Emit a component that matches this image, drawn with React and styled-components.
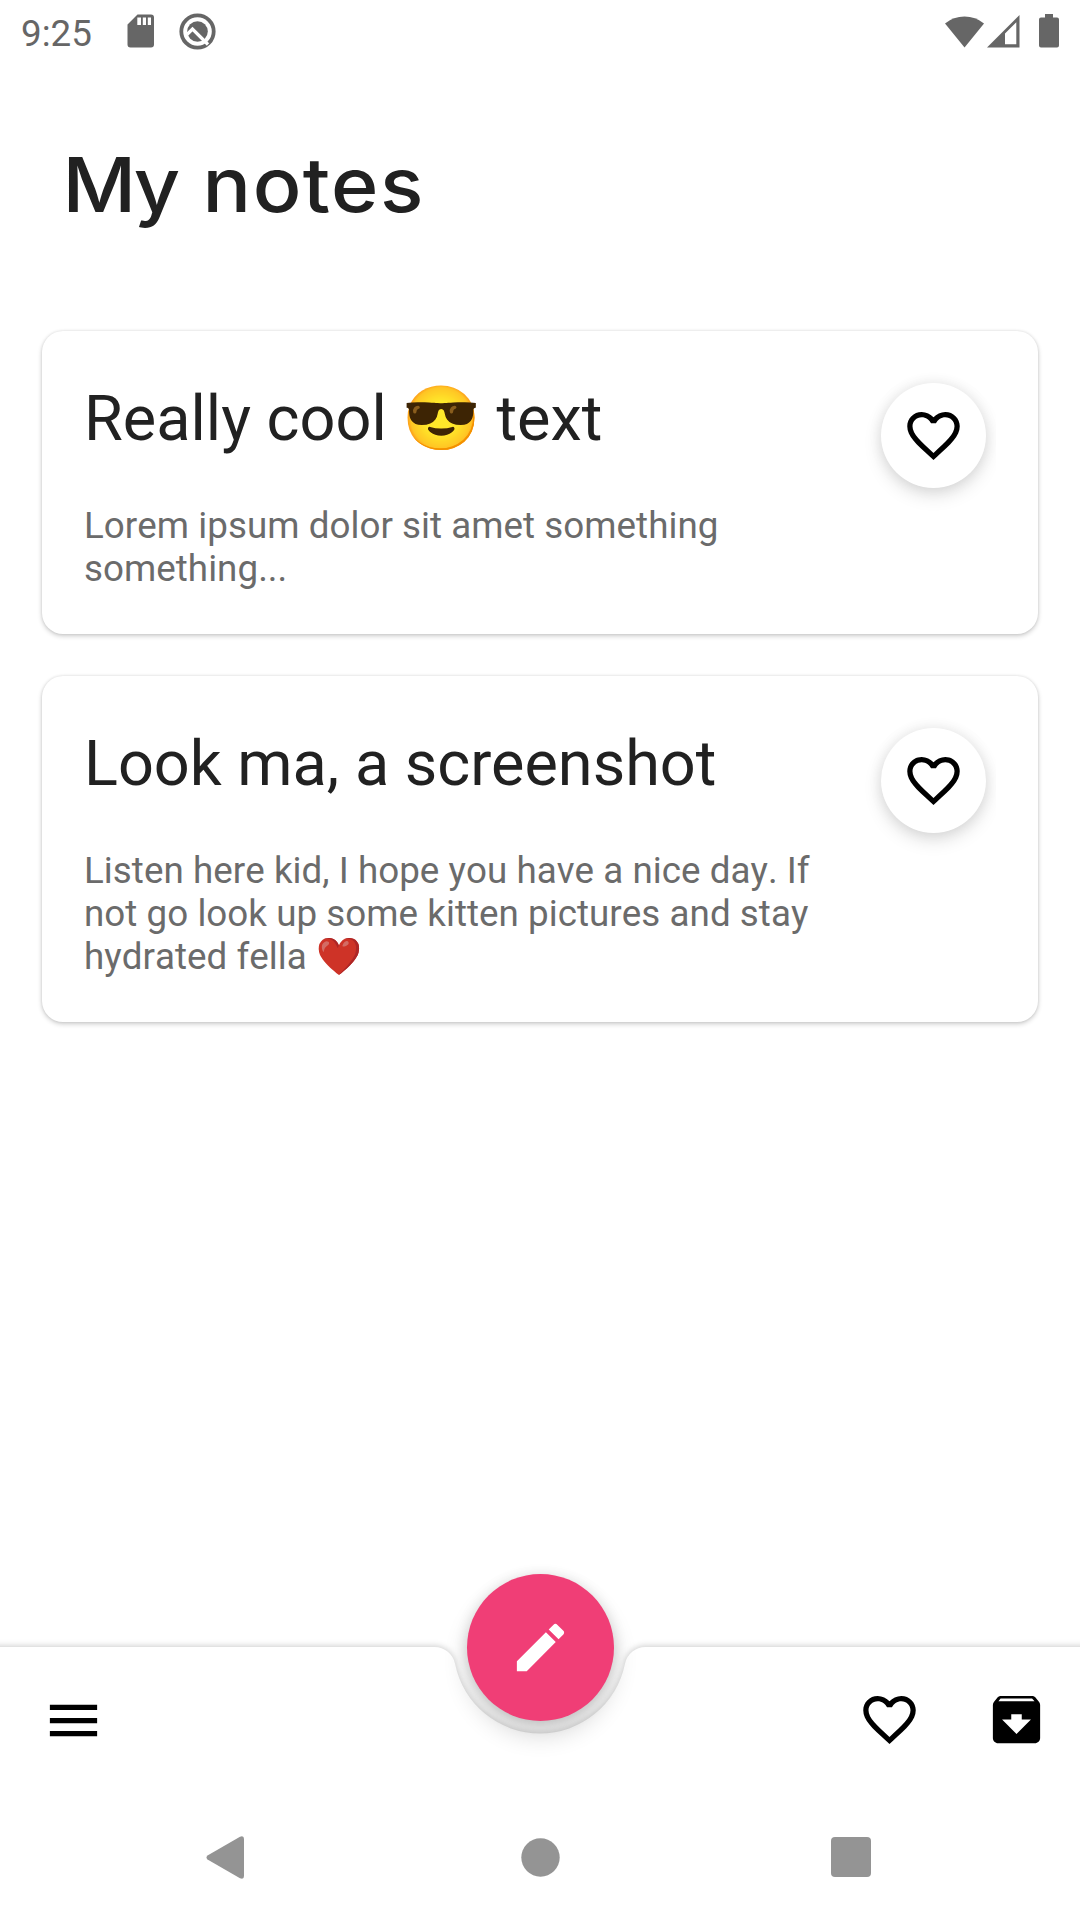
import React from 'react';
import styled, { createGlobalStyle } from 'styled-components';

const GlobalStyle = createGlobalStyle`
  * { box-sizing: border-box; }
  body { margin: 0; background: #fff; font-family: Roboto, "Noto Color Emoji", sans-serif; }
  button { border: 0; padding: 0; background: none; display: grid; place-items: center; }
  svg { display: block; }
`;

const Screen = styled.div`
  width: 1080px;
  height: 1920px;
  display: flex;
  flex-direction: column;
  background: #fff;
  overflow: hidden;
`;

const StatusBar = styled.header`
  height: 63px;
  flex: none;
  display: flex;
  align-items: center;
  justify-content: space-between;
  padding: 0 21px 1px 21px;
  color: #666;
`;

const StatusGroup = styled.div`
  display: flex;
  align-items: center;
  gap: ${(p) => p.$gap}px;
`;

const Clock = styled.span`
  font-size: 36.75px;
  line-height: 43px;
  width: 80px;
  margin-top: 4px;
`;

const Heading = styled.h1`
  margin: 0;
  padding: 76px 0 0 63px;
  height: 268px;
  flex: none;
  font-family: Inter, sans-serif;
  font-size: 75.6px;
  line-height: 92px;
  font-weight: 500;
  letter-spacing: 1.4px;
  word-spacing: -2px;
  color: #212121;
  transform: scaleX(1.067);
  transform-origin: 69px 0;
`;

const FirstLetter = styled.span`
  letter-spacing: -2.2px;
`;

const NoteList = styled.main`
  flex: 1;
  display: flex;
  flex-direction: column;
  gap: 42px;
  padding: 0 42px;
`;

const Card = styled.article`
  display: flex;
  justify-content: space-between;
  padding: 0 0 44px 42px;
  border-radius: 21px;
  background: #fff;
  box-shadow: 0 2px 5px rgba(0, 0, 0, 0.2), 0 0 3px rgba(0, 0, 0, 0.1);
`;

const CardText = styled.div`
  width: 760px;
  padding-top: 51px;
`;

const CardTitle = styled.h2`
  margin: 0;
  font-size: 63px;
  line-height: 74px;
  font-weight: 400;
  color: #212121;
  white-space: nowrap;
`;

const CardBody = styled.div`
  margin: 48px 0 0;
  font-size: 36.75px;
  line-height: 43px;
  font-kerning: none;
  letter-spacing: 0.04px;
  color: #6b6b6b;
  white-space: nowrap;
`;

const BodyLine = styled.div`
  height: 43px;
  display: flex;
  gap: 10px;
`;

const Emoji = styled.span`
  filter: ${(p) => p.$tone};
`;

const FavoriteSlot = styled.div`
  padding: 52px 10px 0 0;
  margin-right: 42px;
  clip-path: inset(0 0 -30px -30px);
`;

const FavoriteButton = styled.button`
  width: 105px;
  height: 105px;
  border-radius: 50%;
  background: #fff;
  box-shadow: 0 7px 18px rgba(0, 0, 0, 0.13), 0 0 14px rgba(0, 0, 0, 0.08);
`;

const AppBar = styled.footer`
  position: relative;
  flex: none;
  height: 147px;
  display: flex;
  align-items: center;
  justify-content: space-between;
  padding: 0 32px 0 42px;
`;

const BarShadow = styled.div`
  position: absolute;
  inset: 0 -20px -126px;
  filter: drop-shadow(0 -1px 3px rgba(0, 0, 0, 0.2));
`;

const BarSurface = styled.div`
  height: 100%;
  background: #fff;
  clip-path: path("M0 0H454.5A21 21 0 0 1 475.1 16.9A86.6 86.6 0 0 0 644.9 16.9A21 21 0 0 1 665.5 0H1120V273H0Z");
`;

const BarActions = styled.div`
  position: relative;
  display: flex;
  gap: ${(p) => p.$gap || 0}px;
  padding-bottom: ${(p) => (p.$gap ? 2 : 0)}px;
`;

const ComposeButton = styled.button`
  position: absolute;
  left: 467px;
  top: -73px;
  width: 147px;
  height: 147px;
  border-radius: 50%;
  background: #f03e76;
  box-shadow: 0 14px 24px rgba(0, 0, 0, 0.16), 0 2px 14px rgba(0, 0, 0, 0.14);
`;

const SystemNav = styled.nav`
  position: relative;
  flex: none;
  height: 126px;
  display: grid;
  grid-template-columns: 38px 1fr 40px;
  align-items: center;
  justify-items: center;
  padding: 0 209px 0 206px;
`;

const HomeKey = styled.span`
  padding-left: 5px;
`;

const Material = ({ d, fill = '#000', size = 63 }) => (
  <svg width={size} height={size} viewBox="0 0 24 24" fill={fill}>
    <path d={d} />
  </svg>
);

const HEART =
  'M16.5 3c-1.74 0-3.41.81-4.5 2.09C10.91 3.81 9.24 3 7.5 3 4.42 3 2 5.42 2 8.5c0 3.78 3.4 6.86 8.55 11.54L12 21.35l1.45-1.32C18.6 15.36 22 12.28 22 8.5 22 5.42 19.58 3 16.5 3zm-4.4 15.55l-.1.1-.1-.1C7.14 14.24 4 11.39 4 8.5 4 6.5 5.5 5 7.5 5c1.54 0 3.04.99 3.57 2.36h1.87C13.46 5.99 14.96 5 16.5 5c2 0 3.5 1.5 3.5 3.5 0 2.89-3.14 5.74-7.9 10.05z';
const PENCIL =
  'M3 17.25V21h3.75L17.81 9.94l-3.75-3.75L3 17.25zM20.71 7.04c.39-.39.39-1.02 0-1.41l-2.34-2.34c-.39-.39-1.02-.39-1.41 0l-1.83 1.83 3.75 3.75 1.83-1.83z';
const MENU = 'M3 18h18v-2H3v2zm0-5h18v-2H3v2zm0-7v2h18V6H3z';
const ARCHIVE =
  'M20.54 5.23l-1.39-1.68C18.88 3.21 18.47 3 18 3H6c-.47 0-.88.21-1.16.55L3.46 5.23C3.17 5.57 3 6.02 3 6.5V19c0 1.1.9 2 2 2h14c1.1 0 2-.9 2-2V6.5c0-.48-.17-.93-.46-1.27zM12 17.5L6.5 12H10v-2h4v2h3.5L12 17.5zM5.12 5l.81-1h12l.94 1H5.12z';

const notes = [
  {
    id: 'cool',
    title: (
      <>
        Really cool <Emoji $tone="contrast(1.08)">😎</Emoji> text
      </>
    ),
    lines: [{ text: 'Lorem ipsum dolor sit amet something' }, { text: 'something...' }],
  },
  {
    id: 'screenshot',
    title: 'Look ma, a screenshot',
    lines: [
      { text: 'Listen here kid, I hope you have a nice day. If' },
      { text: 'not go look up some kitten pictures and stay' },
      { text: 'hydrated fella', emoji: '❤️' },
    ],
  },
];

const SdCardIcon = () => (
  <svg width="27" height="34" viewBox="0 0 27 34" fill="#666">
    <path
      fillRule="evenodd"
      d="M10.5.5H24a3 3 0 0 1 3 3V30.500a3 3 0 0 1-3 3H3.500a3 3 0 0 1-3-3V10.500ZM10.300 3.500V11H14V3.500ZM15.800 3.500V11H19V3.500ZM20.800 3.500V11H24V3.500Z"
    />
  </svg>
);

const QIcon = () => (
  <svg width="37" height="37" viewBox="0 0 37 37" fill="none">
    <circle cx="18.5" cy="18.5" r="16.2" stroke="#666" strokeWidth="3.8" />
    <circle cx="18.5" cy="18.5" r="10.300" fill="#666" />
    <path d="M8 21.500L13.500 16L29 31.500" stroke="#fff" strokeWidth="3.300" />
  </svg>
);

const WifiIcon = () => (
  <svg width="39" height="33" viewBox="0 0 39 33" fill="#666">
    <path d="M0 8.500A31 31 0 0 1 39 8.500L19.500 32.500Z" />
  </svg>
);

const SignalIcon = () => (
  <svg width="33" height="33" viewBox="0 0 33 33" fill="#666">
    <path fillRule="evenodd" d="M0 32.500L32.500 0V32.500ZM18 18.500V29.200H29.300V7.300Z" />
  </svg>
);

const BatteryIcon = () => (
  <svg width="20" height="34" viewBox="0 0 20 34" fill="#666">
    <path d="M6 0H14V3.500H18A2 2 0 0 1 20 5.500V31.500A2 2 0 0 1 18 33.500H2A2 2 0 0 1 0 31.500V5.500A2 2 0 0 1 2 3.500H6Z" />
  </svg>
);

export default function App() {
  return (
    <Screen>
      <GlobalStyle />
      <StatusBar>
        <StatusGroup $gap={25.5}>
          <Clock>9:25</Clock>
          <SdCardIcon />
          <QIcon />
        </StatusGroup>
        <StatusGroup $gap={19}>
          <StatusGroup $gap={3}>
            <WifiIcon />
            <SignalIcon />
          </StatusGroup>
          <BatteryIcon />
        </StatusGroup>
      </StatusBar>
      <Heading>
        <FirstLetter>M</FirstLetter>y notes
      </Heading>
      <NoteList>
        {notes.map((note) => (
          <Card key={note.id}>
            <CardText>
              <CardTitle>{note.title}</CardTitle>
              <CardBody>
                {note.lines.map((line) => (
                  <BodyLine key={line.text}>
                    <span>{line.text}</span>
                    {line.emoji && <Emoji $tone="brightness(0.8) saturate(1.1)">{line.emoji}</Emoji>}
                  </BodyLine>
                ))}
              </CardBody>
            </CardText>
            <FavoriteSlot>
              <FavoriteButton aria-label="Favorite">
                <Material d={HEART} />
              </FavoriteButton>
            </FavoriteSlot>
          </Card>
        ))}
      </NoteList>
      <AppBar>
        <BarShadow>
          <BarSurface />
        </BarShadow>
        <BarActions>
          <Material d={MENU} />
        </BarActions>
        <BarActions $gap={64}>
          <Material d={HEART} />
          <Material d={ARCHIVE} />
        </BarActions>
        <ComposeButton aria-label="New note">
          <Material d={PENCIL} fill="#fff" />
        </ComposeButton>
      </AppBar>
      <SystemNav>
        <svg width="38" height="43" viewBox="0 0 38 43" fill="#949494">
          <path d="M1.500 19.500L34 .8Q38 -.8 38 3V40Q38 43.800 34 42.200L1.500 23.500Q-.5 21.500 1.500 19.500Z" />
        </svg>
        <HomeKey>
          <svg width="39" height="39" viewBox="0 0 39 39" fill="#949494">
            <circle cx="19.500" cy="19.500" r="19.200" />
          </svg>
        </HomeKey>
        <svg width="40" height="40" viewBox="0 0 40 40" fill="#949494">
          <rect width="40" height="40" rx="4" />
        </svg>
      </SystemNav>
    </Screen>
  );
}
